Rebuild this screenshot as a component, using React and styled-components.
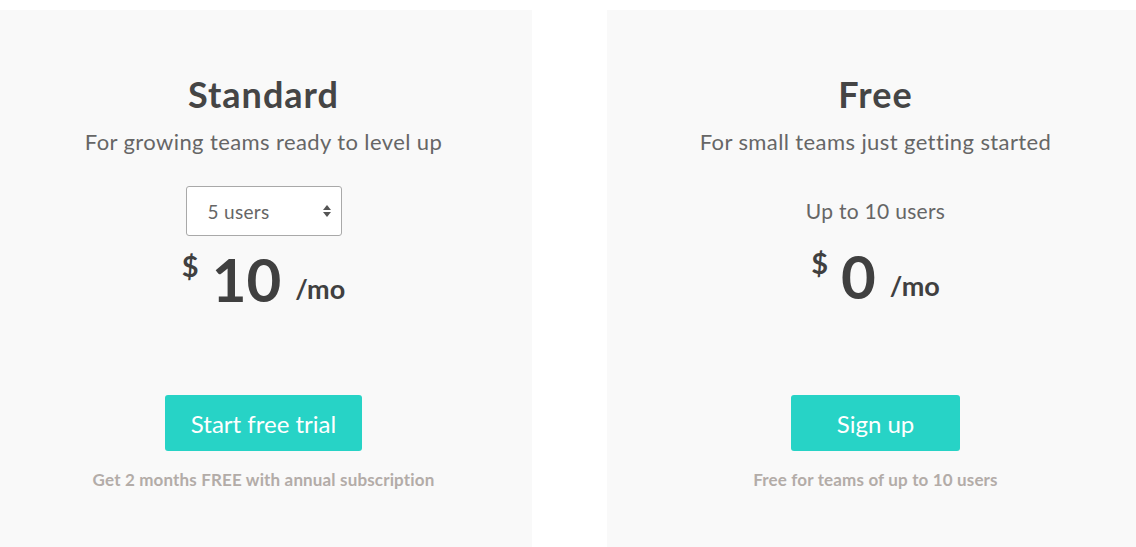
import React from "react";
import styled, { createGlobalStyle } from "styled-components";

const Global = createGlobalStyle`
  html, body { margin: 0; padding: 0; background: #ffffff; overflow: hidden; }
  body { font-family: "Lato", "Liberation Sans", sans-serif; }
  * { box-sizing: border-box; }
`;

const Page = styled.div`
  display: flex;
  gap: 75px;
  margin: 10px 0 0 -5px;
  width: 1200px;
`;

const Card = styled.section`
  width: 537px;
  height: 560px;
  background: #f9f9f9;
  display: flex;
  flex-direction: column;
  align-items: center;
  padding-top: 62px;
`;

const Title = styled.h2`
  margin: 0;
  font-size: 36px;
  line-height: 44px;
  font-weight: 700;
  letter-spacing: 1px;
  color: #454545;
`;

const Subtitle = styled.p`
  margin: 12px 0 0;
  font-size: 22px;
  line-height: 27px;
  letter-spacing: 0.4px;
  color: #666666;
`;

const SeatSlot = styled.div`
  height: 50px;
  margin-top: 31px;
  display: flex;
  align-items: center;
  justify-content: center;
`;

const SelectWrap = styled.div`
  position: relative;
  width: 156px;
  height: 50px;
`;

const Select = styled.select`
  appearance: none;
  -webkit-appearance: none;
  width: 100%;
  height: 100%;
  border: 1px solid #a9a9a9;
  border-radius: 3px;
  background: #ffffff;
  padding: 0 0 0 21px;
  font-family: "Lato", "Liberation Sans", sans-serif;
  font-size: 19px;
  letter-spacing: 0.3px;
  color: #666666;
  outline: none;
`;

const Arrows = styled.svg`
  position: absolute;
  right: 10px;
  top: 18px;
  width: 10px;
  height: 14px;
  pointer-events: none;
`;

const Users = styled.div`
  font-size: 21px;
  letter-spacing: 0.3px;
  color: #666666;
  margin-top: -2px;
`;

const Price = styled.div`
  display: flex;
  align-items: flex-start;
  margin-top: ${(p) => p.$offset}px;
  color: #404040;
`;

const Currency = styled.span`
  font-size: 29px;
  font-weight: 700;
  line-height: 29px;
  margin-top: 5px;
  margin-right: 13px;
`;

const Amount = styled.span`
  font-size: 60px;
  font-weight: 700;
  line-height: 66px;
`;

const Period = styled.span`
  align-self: flex-end;
  font-size: 27px;
  font-weight: 700;
  line-height: 27px;
  margin: 0 0 10px 14px;
`;

const Button = styled.button`
  margin-top: ${(p) => p.$offset}px;
  height: 56px;
  width: ${(p) => p.$w}px;
  border: none;
  border-radius: 3px;
  background: #27d3c6;
  color: #ffffff;
  font-family: "Lato", "Liberation Sans", sans-serif;
  font-size: 24px;
  cursor: pointer;
`;

const Note = styled.p`
  margin: 18px 0 0;
  font-size: 17px;
  font-weight: 700;
  letter-spacing: 0.15px;
  color: #b3aca8;
`;

function ArrowIcon() {
  return (
    <Arrows viewBox="0 0 10 14">
      <path d="M5 1 L9 6 H1 Z" fill="#555" />
      <path d="M5 13 L9 8 H1 Z" fill="#555" />
    </Arrows>
  );
}

export default function App() {
  return (
    <>
      <Global />
      <Page>
        <Card>
          <Title>Standard</Title>
          <Subtitle>For growing teams ready to level up</Subtitle>
          <SeatSlot>
            <SelectWrap>
              <Select defaultValue="5">
                <option value="5">5 users</option>
                <option value="10">10 users</option>
                <option value="15">15 users</option>
              </Select>
              <ArrowIcon />
            </SelectWrap>
          </SeatSlot>
          <Price $offset={10}>
            <Currency>$</Currency>
            <Amount>10</Amount>
            <Period>/mo</Period>
          </Price>
          <Button $offset={83} $w={197}>Start free trial</Button>
          <Note>Get 2 months FREE with annual subscription</Note>
        </Card>
        <Card>
          <Title>Free</Title>
          <Subtitle>For small teams just getting started</Subtitle>
          <SeatSlot>
            <Users>Up to 10 users</Users>
          </SeatSlot>
          <Price $offset={7}>
            <Currency>$</Currency>
            <Amount>0</Amount>
            <Period>/mo</Period>
          </Price>
          <Button $offset={86} $w={169}>Sign up</Button>
          <Note>Free for teams of up to 10 users</Note>
        </Card>
      </Page>
    </>
  );
}
